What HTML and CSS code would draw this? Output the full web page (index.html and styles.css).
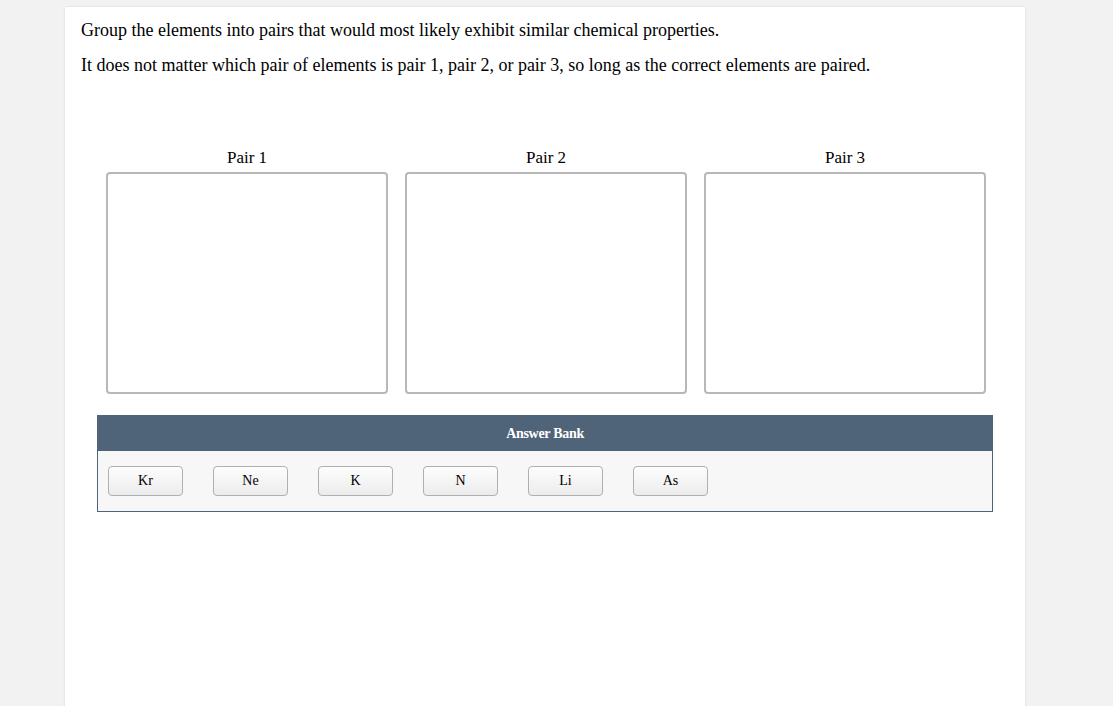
FILE: index.html
```html
<!DOCTYPE html>
<html>
<head>
<meta charset="utf-8">
<link rel="stylesheet" href="styles.css">
</head>
<body>
<div class="card">
  <p class="q">Group the elements into pairs that would most likely exhibit similar chemical properties.</p>
  <p class="q second">It does not matter which pair of elements is pair 1, pair 2, or pair 3, so long as the correct elements are paired.</p>
  <div class="pairs">
    <div class="pair">
      <div class="label">Pair 1</div>
      <div class="drop"></div>
    </div>
    <div class="pair">
      <div class="label">Pair 2</div>
      <div class="drop"></div>
    </div>
    <div class="pair">
      <div class="label">Pair 3</div>
      <div class="drop"></div>
    </div>
  </div>
  <div class="bank">
    <div class="bank-head">Answer Bank</div>
    <div class="bank-body">
      <div class="chip">Kr</div>
      <div class="chip">Ne</div>
      <div class="chip">K</div>
      <div class="chip">N</div>
      <div class="chip">Li</div>
      <div class="chip">As</div>
    </div>
  </div>
</div>
</body>
</html>
```
FILE: styles.css
```css
html, body {
  margin: 0;
  padding: 0;
  background: #f2f2f2;
  height: 100%;
}
body {
  font-family: "Liberation Serif", "Times New Roman", serif;
  color: #000;
  overflow: hidden;
}
.card {
  background: #fff;
  width: 960px;
  margin: 7px 0 0 65px;
  padding: 13px 0 0 0;
  min-height: 720px;
  box-sizing: border-box;
  box-shadow: 0 0 2px rgba(0,0,0,0.12);
}
.q {
  margin: 0 0 0 16px;
  font-size: 18px;
  line-height: 20px;
}
.q.second {
  margin-top: 15px;
}
.pairs {
  display: flex;
  gap: 17px;
  margin: 73px 0 0 41px;
}
.pair {
  width: 282px;
  display: flex;
  flex-direction: column;
}
.label {
  text-align: center;
  font-size: 17px;
  line-height: 20px;
  height: 20px;
  margin-bottom: 4px;
}
.drop {
  height: 222px;
  border: 2px solid #b8b8b8;
  border-radius: 4px;
  box-sizing: border-box;
}
.bank {
  margin: 21px 0 0 32px;
  width: 896px;
  border: 1px solid #4f6479;
  box-sizing: border-box;
}
.bank-head {
  background: #4f6479;
  color: #fff;
  height: 35px;
  line-height: 35px;
  text-align: center;
  font-size: 14px;
  font-weight: bold;
  letter-spacing: -0.3px;
}
.bank-body {
  background: #f7f7f7;
  height: 60px;
  display: flex;
  align-items: center;
  gap: 30px;
  padding-left: 10px;
  box-sizing: border-box;
}
.chip {
  width: 75px;
  height: 30px;
  box-sizing: border-box;
  border: 1px solid #b0b0b0;
  border-radius: 4px;
  background: linear-gradient(#fdfdfd, #ececec);
  text-align: center;
  line-height: 28px;
  font-size: 14px;
}
```
